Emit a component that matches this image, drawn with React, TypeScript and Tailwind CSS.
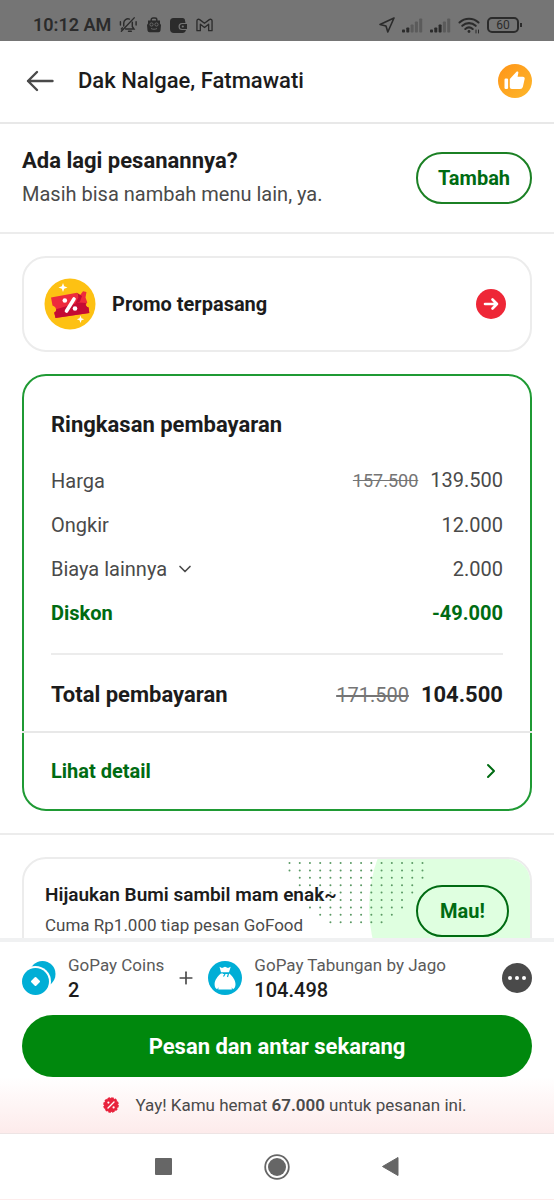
import React from 'react';
import { ChevronDown, ChevronRight, Plus } from 'lucide-react';

type PriceRow = {
  label: string;
  value: string;
  oldValue?: string;
  expandable?: boolean;
  discount?: boolean;
};

const priceRows: PriceRow[] = [
  { label: 'Harga', value: '139.500', oldValue: '157.500' },
  { label: 'Ongkir', value: '12.000' },
  { label: 'Biaya lainnya', value: '2.000', expandable: true },
  { label: 'Diskon', value: '-49.000', discount: true },
];

// first and last dot column for every row of the banner pattern
const dotRows = [
  [0, 13],
  [0, 13],
  [1, 13],
  [1, 12],
  [2, 12],
  [2, 11],
  [2, 11],
  [3, 10],
  [4, 9],
];

const SignalIcon: React.FC<{ level: number }> = ({ level }) => (
  <svg width="21" height="15" viewBox="0 0 21 15" fill="#2b2b2b" aria-hidden="true">
    {[3, 5, 8, 11, 14].map((h, i) => (
      <rect key={h} x={i * 4.3} y={14.5 - h} width="3" height={h} rx="0.8" opacity={i < level ? 1 : 0.35} />
    ))}
  </svg>
);

const StatusBar: React.FC = () => (
  <div className="flex h-[41px] shrink-0 items-end justify-between bg-[#757575] pr-8 pb-1 pl-[33px] text-[#2b2b2b]">
    <div className="flex items-center gap-2">
      <span className="text-lg leading-6 font-semibold">10:12 AM</span>
      <div className="flex items-center gap-[9px]">
        <svg width="19" height="18" viewBox="0 0 20 18" fill="none" stroke="currentColor" strokeWidth="1.5" strokeLinecap="round" aria-hidden="true">
          <path d="M5 10V7a4.5 4.5 0 0 1 6-4.2M14 6v4.5l1.8 2.7H7M10 15.5h3M2.5 15.5 16 1.5M1.5 5.5v3.5M18 5.5v3.5M3.5 12l-1 1.2" />
        </svg>
        <svg width="14" height="16" viewBox="0 0 14 16" aria-hidden="true">
          <path d="M4.2 4V2.7C4.2 1.7 5 1 6 1h2c1 0 1.8.7 1.8 1.7V4" fill="none" stroke="currentColor" strokeWidth="1.5" />
          <path d="M1 3.5h12v3L14 8l-.5 5.5a2 2 0 0 1-2 1.8h-9a2 2 0 0 1-2-1.8L0 8l1-1.5z" fill="currentColor" />
          <circle cx="4.5" cy="7.5" r="1.6" fill="none" stroke="#757575" strokeWidth="0.8" />
          <circle cx="9.5" cy="7.5" r="1.6" fill="none" stroke="#757575" strokeWidth="0.8" />
          <path d="M4 11.5c2 1 4 1 6 0" fill="none" stroke="#757575" strokeWidth="0.8" />
        </svg>
        <svg width="17" height="15" viewBox="0 0 17 15" fill="currentColor" aria-hidden="true">
          <path d="M3.5 0h9A2.5 2.5 0 0 1 15 2.500L15.500 5H12a2.800 2.800 0 0 0 0 7h4a4 4 0 0 1-4 3H4a4 4 0 0 1-4-4V3.500A3.500 3.500 0 0 1 3.500 0z" />
          <path d="M12.300 6H17v5h-4.700a2.500 2.500 0 0 1 0-5z" />
          <circle cx="12.800" cy="8.500" r="1.100" fill="#757575" />
        </svg>
        <svg width="17" height="14" viewBox="0 0 18 14" fill="none" stroke="currentColor" strokeWidth="1.4" strokeLinejoin="round" aria-hidden="true">
          <path d="M1 2.5C1 1 2.8.5 3.9 1.3L9 5.2l5.1-3.9C15.200.5 17 1 17 2.500V13h-3.600V6.200L9 9.600 4.600 6.200V13H1z" />
        </svg>
      </div>
    </div>
    <div className="flex h-6 items-center gap-[7px]">
      <svg width="16" height="16" viewBox="0 0 16 16" fill="none" stroke="currentColor" strokeWidth="1.6" strokeLinejoin="round" aria-hidden="true">
        <path d="M15 1 1 7.5l6 1.5 1.8 6z" />
      </svg>
      <SignalIcon level={2} />
      <SignalIcon level={3} />
      <svg width="22" height="17" viewBox="0 0 22 17" fill="none" stroke="currentColor" strokeWidth="2.1" strokeLinecap="round" aria-hidden="true">
        <path d="M1.5 5.5c5.400-5 13.600-5 19 0M4.300 8.800c3.900-3.600 9.500-3.600 13.400 0M7.300 12c2.200-2 5.200-2 7.400 0" />
        <circle cx="11" cy="14.5" r="1.4" fill="currentColor" stroke="none" />
        <path d="M18 13v3M20.5 13v3" strokeWidth="1" />
      </svg>
      <div className="flex items-center">
        <span className="flex h-4 w-8 items-center justify-center rounded-[5px] border-2 border-[#2b2b2b] text-xs leading-3">60</span>
        <span className="ml-px h-1 w-[2px] bg-[#2b2b2b]" />
      </div>
    </div>
  </div>
);

const LikeBadge: React.FC = () => (
  <svg width="34" height="34" viewBox="0 0 34 34" aria-hidden="true">
    <defs>
      <linearGradient id="like" x1="0" y1="0" x2="1" y2="1">
        <stop offset="0" stopColor="#ff9417" />
        <stop offset="1" stopColor="#fdb72b" />
      </linearGradient>
    </defs>
    <circle cx="17" cy="17" r="17" fill="url(#like)" />
    <rect x="6.5" y="14.5" width="3.6" height="10.5" rx="1.2" fill="#fff" />
    <path d="M11.800 15 18.500 7.800c.7-.8 2-.3 1.900.8l-.8 4.200h5.100a2 2 0 0 1 1.900 2.500l-1.700 7.400a2.900 2.900 0 0 1-2.800 2.300h-8.300a2 2 0 0 1-2-2z" fill="#fff" />
  </svg>
);

const PromoIcon: React.FC = () => (
  <svg width="52" height="52" viewBox="0 0 52 52" aria-hidden="true">
    <circle cx="26" cy="26" r="25.5" fill="#fdc113" />
    <path d="M7 19.500 33 14.800l1.300 4.700 4.700-6.200 3.500.7-1 5.500 1.800 5c-2 1.500-1.500 4.500 1.300 5l.7 5.500L11.500 40l-1.300-5.500c3-1 2.500-5.500-1.700-7z" fill="#ee2a3c" />
    <path d="M42 25c-.8 1.500 0 4 2.600 4.500l.7 5.500L11.500 40l-1.300-5.500c1.500-.5 2.200-1.800 2-3.200L35 24.500z" fill="#c40b33" />
    <path d="m33 14.800 1.300 4.700L31 26l5-2.500 2-5.500z" fill="#c40b33" />
    <path d="m22.500 33 7.500-12" stroke="#fff" strokeWidth="3.6" strokeLinecap="round" />
    <circle cx="20.800" cy="22.500" r="2.300" fill="#fff" />
    <circle cx="31" cy="30.500" r="2.300" fill="#fff" />
    <path d="m19 5 1.200 3.300 3.300 1.200-3.300 1.200L19 14l-1.200-3.300-3.300-1.200 3.300-1.200zM36.500 37.500l1 2.700 2.700 1-2.700 1-1 2.700-1-2.700-2.700-1 2.700-1z" fill="#fff" />
  </svg>
);

const CoinsIcon: React.FC = () => (
  <svg width="34" height="34" viewBox="0 0 34 34" className="shrink-0" aria-hidden="true">
    <circle cx="20.5" cy="13" r="13" fill="#00aed6" />
    <circle cx="13.5" cy="20.5" r="15.5" fill="#fff" />
    <circle cx="13.5" cy="20.5" r="13.5" fill="#00aed6" />
    <path d="m13.500 17 3.500 3.500-3.500 3.500-3.500-3.500z" fill="#fff" stroke="#fff" strokeWidth="2" strokeLinejoin="round" />
  </svg>
);

const SavingsIcon: React.FC = () => (
  <svg width="34" height="34" viewBox="0 0 34 34" className="shrink-0" aria-hidden="true">
    <circle cx="17" cy="17" r="17" fill="#00aed6" />
    <path d="M11.500 5.800 14 7l3-1.200L20 7l2.700-1.200-1.700 5.400h-8z" fill="#fff" />
    <path d="M13 12.500h8.200c3.500 2.500 6.300 7 6.300 10.700 0 2.600-1 4.300-2.500 5.100l-1.300-2 .2 2.300H10.300l.2-2.300-1.400 2C7.500 27.400 6.600 25.800 6.600 23.200c0-3.700 2.900-8.200 6.400-10.700z" fill="#fff" />
    <path d="M15 12.500h5.500l-1 3.500M17 13l-1.500 2.500" fill="none" stroke="#00aed6" strokeWidth="1.2" />
  </svg>
);

const SavingBadge: React.FC = () => (
  <svg width="16" height="16" viewBox="0 0 16 16" className="shrink-0" aria-hidden="true">
    <circle cx="8" cy="8" r="7" fill="#e8223c" />
    <circle cx="8" cy="8" r="7" fill="none" stroke="#e8223c" strokeWidth="1.6" strokeDasharray="2.6 1.065" />
    <path d="m5 11 6-6" stroke="#fff" strokeWidth="1.4" strokeLinecap="round" />
    <circle cx="5.4" cy="5.6" r="1.1" fill="#fff" />
    <circle cx="10.6" cy="10.4" r="1.1" fill="#fff" />
  </svg>
);

const SummaryCard: React.FC = () => (
  <section className="mx-[22px] mt-[22px] rounded-3xl border-2 border-[#1f9a34]">
    <div className="px-[27px] pt-[33px] pb-5">
      <h2 className="text-[22px] leading-8 font-bold">Ringkasan pembayaran</h2>
      <table className="mt-[18px] w-full text-xl leading-6 text-[#4a4a4a]">
        <tbody>
          {priceRows.map((row) => (
            <tr key={row.label} className={row.discount ? 'h-11 font-bold text-[#006b12]' : 'h-11'}>
              <th scope="row" className={row.discount ? 'text-left font-bold' : 'text-left font-normal'}>
                {row.expandable ? (
                  <button className="flex items-center gap-2">
                    {row.label}
                    <ChevronDown className="h-5 w-5" strokeWidth={2} />
                  </button>
                ) : (
                  row.label
                )}
              </th>
              <td className="text-right">
                {row.oldValue && <s className="mr-3 text-lg text-[#757575]">{row.oldValue}</s>}
                {row.value}
              </td>
            </tr>
          ))}
        </tbody>
      </table>
      <div className="mt-[18px] flex items-center justify-between border-t-2 border-[#ececec] pt-6 text-[22px] leading-8">
        <span className="font-bold">Total pembayaran</span>
        <span className="font-bold">
          <s className="mr-3 text-xl font-normal text-[#757575]">171.500</s>
          104.500
        </span>
      </div>
    </div>
    <button className="-mx-[2px] flex w-[calc(100%+4px)] items-center justify-between border-t-2 border-[#e8e8e8] px-[29px] py-6 text-xl leading-7 font-bold text-[#006b12]">
      Lihat detail
      <ChevronRight className="h-6 w-6" strokeWidth={2} />
    </button>
  </section>
);

const GreenBanner: React.FC = () => (
  <section className="relative mx-[22px] mt-[22px] flex items-center justify-between overflow-hidden rounded-3xl border-2 border-[#ececec] px-[21px] py-[22px]">
    <svg width="250" height="110" viewBox="0 0 250 110" className="absolute top-0 right-0" aria-hidden="true">
      <circle cx="229" cy="48" r="140" fill="#dfffe0" />
      {dotRows.map(([from, to], row) =>
        Array.from({ length: to - from + 1 }, (_, i) => (
          <circle key={`${row}-${i}`} cx={9.5 + (from + i) * 10.23} cy={4 + row * 7.4} r="1" fill="#5a9a64" />
        ))
      )}
    </svg>
    <div className="relative">
      <h3 className="text-[19px] leading-7 font-semibold">Hijaukan Bumi sambil mam enak~</h3>
      <p className="text-[17px] leading-8 text-[#4a4a4a]">Cuma Rp1.000 tiap pesan GoFood</p>
    </div>
    <button className="relative h-[52px] w-[93px] rounded-full border-2 border-[#006b12] text-xl font-bold text-[#006b12]">
      Mau!
    </button>
  </section>
);

const PaymentFooter: React.FC = () => (
  <footer className="shrink-0 border-t-4 border-[#f0f1f2] bg-white">
    <div className="flex items-center px-[22px] pt-[11px] pb-3">
      <CoinsIcon />
      <div className="ml-3 leading-[25px]">
        <p className="text-[17px] text-[#5a5a5a]">GoPay Coins</p>
        <p className="text-xl leading-[25px] font-medium">2</p>
      </div>
      <Plus className="mx-3 h-5 w-5 text-[#4a4a4a]" strokeWidth={2} />
      <SavingsIcon />
      <div className="ml-3 leading-[25px]">
        <p className="text-[17px] text-[#5a5a5a]">GoPay Tabungan by Jago</p>
        <p className="text-xl leading-[25px] font-medium">104.498</p>
      </div>
      <button className="ml-auto flex h-[30px] w-[30px] items-center justify-center gap-[3px] rounded-full bg-[#4a4a4a]" aria-label="Metode lain">
        <span className="h-1 w-1 rounded-full bg-white" />
        <span className="h-1 w-1 rounded-full bg-white" />
        <span className="h-1 w-1 rounded-full bg-white" />
      </button>
    </div>
    <div className="px-[22px]">
      <button className="h-[62px] w-full rounded-full bg-[#00880d] text-[22px] font-bold text-white">
        Pesan dan antar sekarang
      </button>
    </div>
    <p className="flex items-center justify-center border-b border-[#eee4e4] bg-linear-to-b from-white to-[#fdebeb] py-4 pl-4 text-[17px] leading-6 text-[#4a4a4a]">
      <SavingBadge />
      <span className="ml-4">
        Yay! Kamu hemat <b className="font-semibold">67.000</b> untuk pesanan ini.
      </span>
    </p>
    <nav className="flex h-[66px] items-center justify-center gap-[92px] border-b border-[#fdebeb] bg-white text-[#666666]">
      <button aria-label="Aplikasi terbaru">
        <svg width="17" height="17" viewBox="0 0 17 17" fill="currentColor">
          <rect width="17" height="17" rx="1" />
        </svg>
      </button>
      <button aria-label="Beranda">
        <svg width="26" height="26" viewBox="0 0 26 26" fill="currentColor">
          <circle cx="13" cy="13" r="11.8" fill="none" stroke="currentColor" strokeWidth="1.8" />
          <circle cx="13" cy="13" r="9" />
        </svg>
      </button>
      <button aria-label="Kembali">
        <svg width="17" height="19" viewBox="0 0 17 19" fill="currentColor">
          <path d="M16 .5v18L.5 9.5z" stroke="currentColor" strokeLinejoin="round" />
        </svg>
      </button>
    </nav>
  </footer>
);

export default function App() {
  return (
    <div className="flex h-screen flex-col bg-white font-['Roboto',sans-serif] text-[#1c1c1c]">
      <StatusBar />
      <header className="flex h-[83px] shrink-0 items-center border-b-2 border-[#e8e8e8] px-[22px] pb-[2px]">
        <button aria-label="Kembali" className="mr-6 pl-1">
          <svg width="28" height="22" viewBox="0 0 28 22" fill="none" stroke="#4a4a4a" strokeWidth="2.4" strokeLinecap="round" strokeLinejoin="round">
            <path d="M11 2 2 11l9 9M2 11h24.500" />
          </svg>
        </button>
        <h1 className="text-[22px] leading-8 font-medium">Dak Nalgae, Fatmawati</h1>
        <span className="ml-auto">
          <LikeBadge />
        </span>
      </header>

      <main className="min-h-0 flex-1 overflow-hidden">
        <section className="flex items-center justify-between border-b-2 border-[#ececec] px-[22px] py-[21px]">
          <div>
            <h2 className="text-[22px] leading-8 font-bold">Ada lagi pesanannya?</h2>
            <p className="text-xl leading-[34px] text-[#4a4a4a]">Masih bisa nambah menu lain, ya.</p>
          </div>
          <button className="h-[52px] w-[116px] rounded-full border-2 border-[#1b8024] text-xl font-bold text-[#006b12]">
            Tambah
          </button>
        </section>

        <section className="border-b-2 border-[#ececec] pt-[22px] pb-[22px]">
          <button className="mx-[22px] flex h-24 w-[calc(100%-44px)] items-center rounded-3xl border-2 border-[#ececec] px-5">
            <PromoIcon />
            <span className="ml-4 text-xl font-bold">Promo terpasang</span>
            <svg width="30" height="30" viewBox="0 0 30 30" className="mr-1 ml-auto" aria-hidden="true">
              <circle cx="15" cy="15" r="15" fill="#ee2737" />
              <path d="M9 15h12M16.5 10.500 21 15l-4.500 4.500" fill="none" stroke="#fff" strokeWidth="2.600" strokeLinecap="round" strokeLinejoin="round" />
            </svg>
          </button>
          <SummaryCard />
        </section>

        <GreenBanner />
      </main>

      <PaymentFooter />
    </div>
  );
}
